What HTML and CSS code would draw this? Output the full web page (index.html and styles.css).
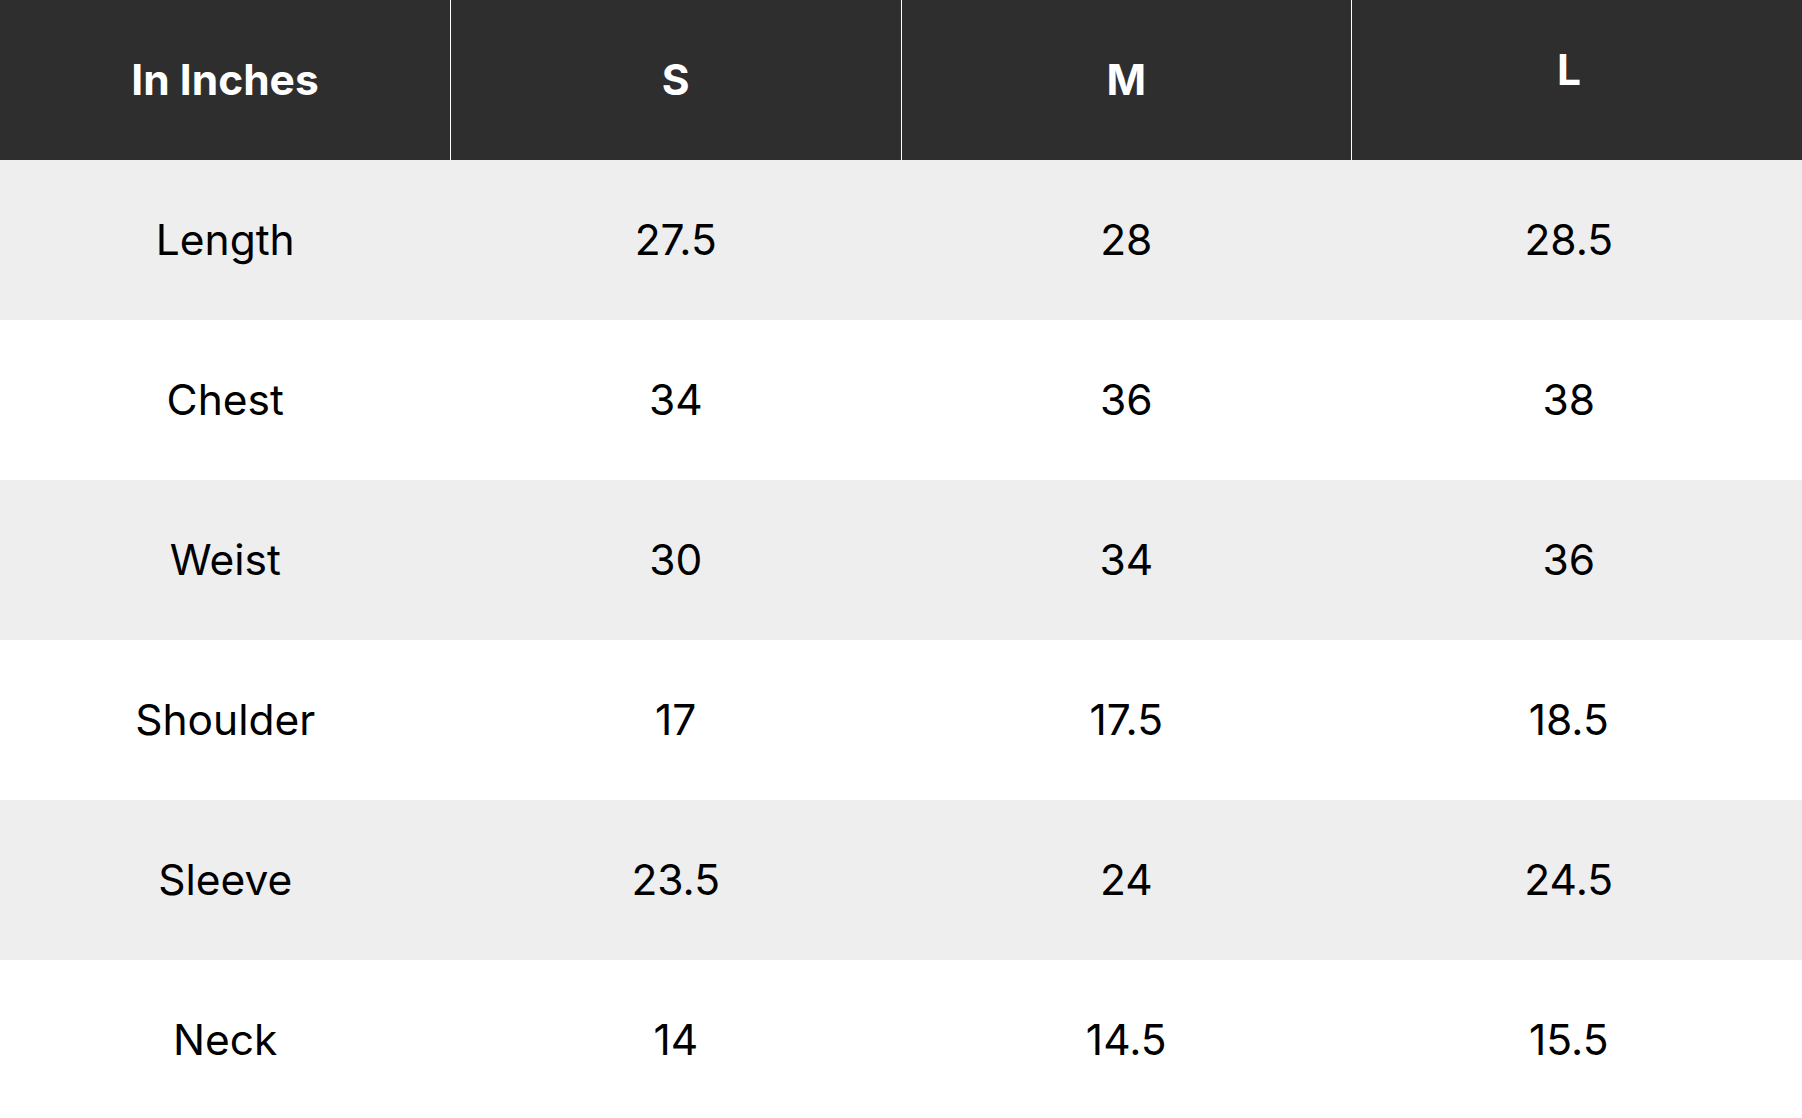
FILE: index.html
```html
<!DOCTYPE html>
<html lang="en">
<head>
<meta charset="utf-8">
<title>Size Chart</title>
<link rel="stylesheet" href="styles.css">
</head>
<body>
<table class="size-table">
  <thead>
    <tr class="head-row">
      <th class="head-cell">In Inches</th>
      <th class="head-cell sep">S</th>
      <th class="head-cell sep">M</th>
      <th class="head-cell sep last lifted">L</th>
    </tr>
  </thead>
  <tbody>
    <tr class="row shaded"><td class="cell">Length</td><td class="cell">27.5</td><td class="cell">28</td><td class="cell last">28.5</td></tr>
    <tr class="row"><td class="cell">Chest</td><td class="cell">34</td><td class="cell">36</td><td class="cell last">38</td></tr>
    <tr class="row shaded"><td class="cell">Weist</td><td class="cell">30</td><td class="cell">34</td><td class="cell last">36</td></tr>
    <tr class="row"><td class="cell">Shoulder</td><td class="cell">17</td><td class="cell">17.5</td><td class="cell last">18.5</td></tr>
    <tr class="row shaded"><td class="cell">Sleeve</td><td class="cell">23.5</td><td class="cell">24</td><td class="cell last">24.5</td></tr>
    <tr class="row"><td class="cell">Neck</td><td class="cell">14</td><td class="cell">14.5</td><td class="cell last">15.5</td></tr>
  </tbody>
</table>
</body>
</html>
```
FILE: styles.css
```css
html, body {
  margin: 0;
  padding: 0;
  background: #ffffff;
}
body {
  font-family: Inter, "Noto Sans", sans-serif;
}
.size-table {
  width: 1802px;
  border-collapse: collapse;
  border-spacing: 0;
  table-layout: fixed;
}
.head-row {
  height: 160px;
}
.head-cell {
  box-sizing: border-box;
  height: 160px;
  padding: 0;
  background: #2e2e2e;
  color: #ffffff;
  font-size: 42.5px;
  font-weight: 700;
  text-align: center;
  vertical-align: middle;
  line-height: 1;
}
.head-cell.sep {
  border-left: 1px solid #ffffff;
}
.head-cell.lifted {
  padding-bottom: 20px;
}
.row {
  height: 160px;
  background: #ffffff;
}
.row.shaded {
  background: #eeeeee;
}
.cell {
  box-sizing: border-box;
  padding: 0;
  color: #000000;
  font-size: 42.5px;
  font-weight: 400;
  text-align: center;
  vertical-align: middle;
  line-height: 1;
}
.last {
  padding-right: 16px;
}
```
